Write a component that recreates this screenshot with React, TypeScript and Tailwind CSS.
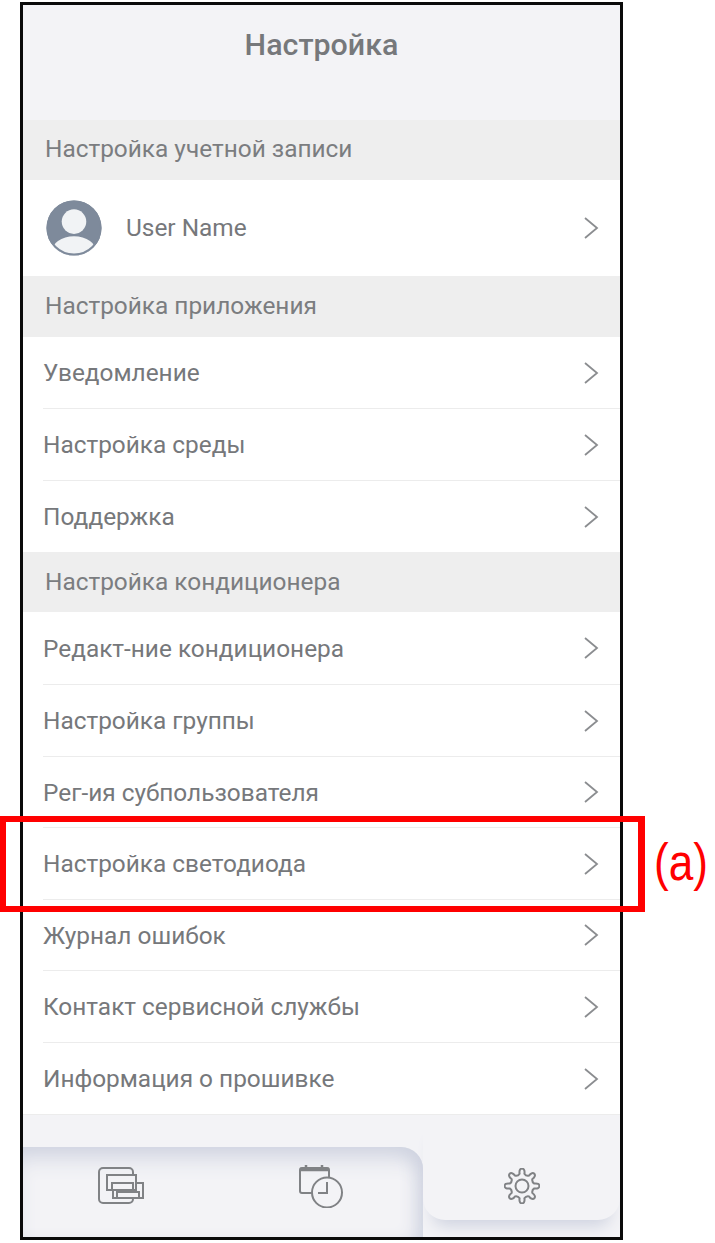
const font = { fontFamily: "Roboto, 'Noto Sans', sans-serif" };

function Chevron() {
  return (
    <svg width="16" height="24" viewBox="0 0 16 24" fill="none" className="shrink-0">
      <path d="M2 2l12 10L2 22" stroke="#8b8d90" strokeWidth="1.8" />
    </svg>
  );
}

function SectionTitle({ label, cls }: { label: string; cls: string }) {
  return (
    <div className={`bg-[#eeeeee] flex items-center pl-[22px] text-[24.4px] text-[#7b7d80] ${cls}`}>
      {label}
    </div>
  );
}

function Row({ label, last, h }: { label: string; last?: boolean; h: string }) {
  return (
    <div className={`pl-[20px] bg-white ${h}`}>
      <div className={`h-full flex items-center justify-between pr-[21px] text-[24.4px] text-[#76787b] ${last ? "" : "border-b border-[#ececec]"}`}>
        <span className="pt-[2px]">{label}</span>
        <Chevron />
      </div>
    </div>
  );
}

function CardsIcon() {
  return (
    <svg width="47" height="38" viewBox="0 0 47 38" fill="none" stroke="#808285" strokeWidth="2">
      <path d="M35 31v1a4 4 0 0 1-4 4H5a4 4 0 0 1-4-4V5a4 4 0 0 1 4-4h26a4 4 0 0 1 4 4v3" />
      <rect x="9" y="8" width="29" height="15" />
      <path d="M14 23v-7h21v7" />
      <path d="M38 16h7v15H15v-8" />
      <path d="M19 31v-6h22v6" />
    </svg>
  );
}

function CalendarClockIcon() {
  return (
    <svg width="47" height="44" viewBox="0 0 47 44" fill="none" stroke="#808285" strokeWidth="2">
      <path d="M14 29H4a2 2 0 0 1-2-2V6a2 2 0 0 1 2-2h25a2 2 0 0 1 2 2v8" />
      <path d="M2 5.5h29" strokeWidth="3.5" />
      <path d="M8 1v5M24 1v5" strokeWidth="2.5" />
      <circle cx="29" cy="28.5" r="15" fill="#f3f3f6" />
      <path d="M29 18v11h-9" />
    </svg>
  );
}

// 8-tooth gear outline, built around the centre of a 36x36 box
function gearPath() {
  const pt = (deg: number, r: number) => {
    const a = ((deg - 90) * Math.PI) / 180;
    return `${(18 + r * Math.cos(a)).toFixed(2)} ${(18 + r * Math.sin(a)).toFixed(2)}`;
  };
  let d = `M${pt(-11, 12.5)}`;
  for (let i = 0; i < 8; i++) {
    const t = i * 45;
    d += `C${pt(t - 11, 19.5)} ${pt(t + 11, 19.5)} ${pt(t + 11, 12.5)}`;
    d += `Q${pt(t + 22.5, 10.5)} ${pt(t + 34, 12.5)}`;
  }
  return d + "Z";
}

function GearIcon() {
  return (
    <svg width="36" height="36" viewBox="0 0 36 36" fill="none" stroke="#808285" strokeWidth="2" strokeLinejoin="round">
      <path d={gearPath()} />
      <circle cx="18" cy="18" r="6.5" />
    </svg>
  );
}

export default function App() {
  return (
    <div className="relative w-[715px] h-[1243px] bg-white overflow-hidden" style={font}>
      {/* Phone frame */}
      <div className="ml-[20px] mt-[2px] w-[603px] h-[1238px] border-[3px] border-[#0a0a0a] bg-[#f3f3f6] flex flex-col overflow-hidden">
        <div className="h-[115px] flex justify-center pt-[22px] text-[30.4px] leading-[36px] font-medium text-[#76787b] shrink-0">
          Настройка
        </div>

        <SectionTitle label="Настройка учетной записи" cls="h-[60px] pb-[2px]" />
        <div className="h-[96px] bg-white flex items-center justify-between pl-[23px] pr-[21px]">
          <div className="flex items-center gap-[24px] text-[24.4px] text-[#76787b]">
            <svg width="56" height="56" viewBox="0 0 57 57">
              <defs>
                <clipPath id="avatarClip">
                  <circle cx="28.5" cy="28.5" r="28" />
                </clipPath>
              </defs>
              <circle cx="28.5" cy="28.5" r="28" fill="#7e8a9b" />
              <g clipPath="url(#avatarClip)">
                <circle cx="28.5" cy="22" r="12.5" fill="#f1f3f5" />
                <ellipse cx="28.5" cy="53" rx="23" ry="16" fill="#f1f3f5" />
              </g>
              <circle cx="28.5" cy="28.5" r="27" fill="none" stroke="#7e8a9b" strokeWidth="2" />
            </svg>
            <span>User Name</span>
          </div>
          <Chevron />
        </div>

        <SectionTitle label="Настройка приложения" cls="h-[61px] pb-[1px]" />
        <Row label="Уведомление" h="h-[72px]" />
        <Row label="Настройка среды" h="h-[72px]" />
        <Row label="Поддержка" h="h-[71px]" last />

        <SectionTitle label="Настройка кондиционера" cls="h-[60px]" />
        <Row label="Редакт-ние кондиционера" h="h-[73px]" />
        <Row label="Настройка группы" h="h-[72px]" />
        <Row label="Рег-ия субпользователя" h="h-[71px]" />
        <Row label="Настройка светодиода" h="h-[72px]" />
        <Row label="Журнал ошибок" h="h-[71px]" />
        <Row label="Контакт сервисной службы" h="h-[72px]" />
        <Row label="Информация о прошивке" h="h-[71px]" last />

        {/* Tab bar */}
        <div className="relative flex-1 flex overflow-hidden border-t border-[#ececec]">
          <div className="flex-1 mt-[32px] rounded-tr-[22px] flex shadow-[inset_0_20px_22px_-10px_#cfd3e0,inset_-14px_0_18px_-8px_#cfd3e0]">
            <div className="w-[197px] flex justify-center pt-[20px]">
              <CardsIcon />
            </div>
            <div className="flex-1 flex justify-center pt-[17px]">
              <CalendarClockIcon />
            </div>
          </div>
          <div className="w-[197px] h-[105px] rounded-b-[22px] bg-[#f3f3f6] flex justify-center items-start pt-[53px] shadow-[0_16px_16px_-10px_#cfd3e0]">
            <GearIcon />
          </div>
        </div>
      </div>

      {/* Annotation */}
      <div className="absolute left-0 top-[816px] w-[645px] h-[96px] border-[6px] border-r-[7px] border-[#ff0000]" />
      <div className="absolute left-[654px] top-[832px] text-[52px] leading-[60px] text-[#ff0000] origin-left scale-x-[0.85]" style={{ fontFamily: "'Liberation Sans', Arial, sans-serif" }}>
        (a)
      </div>
    </div>
  );
}
